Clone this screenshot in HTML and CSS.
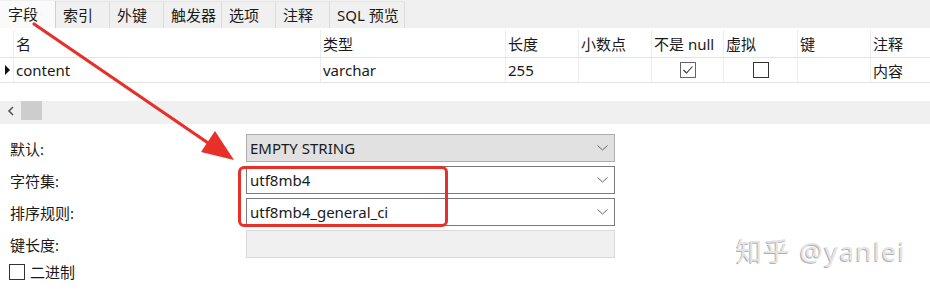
FILE: index.html
```html
<!DOCTYPE html>
<html lang="zh">
<head>
<meta charset="utf-8">
<link rel="stylesheet" href="styles.css">
</head>
<body>
<div class="page">
  <div class="tabs">
    <div class="tab active">字段</div>
    <div class="tab">索引</div>
    <div class="tab">外键</div>
    <div class="tab">触发器</div>
    <div class="tab">选项</div>
    <div class="tab">注释</div>
    <div class="tab">SQL 预览</div>
    <div class="tab-fill"></div>
  </div>

  <div class="grid">
    <div class="cell ind"></div>
    <div class="cell">名</div>
    <div class="cell">类型</div>
    <div class="cell">长度</div>
    <div class="cell">小数点</div>
    <div class="cell">不是 null</div>
    <div class="cell">虚拟</div>
    <div class="cell">键</div>
    <div class="cell last">注释</div>

    <div class="cell ind"><span class="tri"></span></div>
    <div class="cell">content</div>
    <div class="cell">varchar</div>
    <div class="cell">255</div>
    <div class="cell"></div>
    <div class="cell center"><span class="cb checked"><svg width="12" height="10" viewBox="0 0 12 10"><path d="M1.5 5 L4.5 8 L10.5 1.5" fill="none" stroke="#333" stroke-width="1.1"/></svg></span></div>
    <div class="cell center"><span class="cb"></span></div>
    <div class="cell"></div>
    <div class="cell last">内容</div>
  </div>

  <div class="hscroll">
    <span class="sarrow"><svg width="8" height="10" viewBox="0 0 8 10"><path d="M6 1 L2 5 L6 9" fill="none" stroke="#555" stroke-width="1.6"/></svg></span>
    <span class="thumb"></span>
  </div>

  <div class="form">
    <div class="frow">
      <div class="flabel">默认:</div>
      <div class="select disabled"><span>EMPTY STRING</span><svg class="chev" width="11" height="6" viewBox="0 0 11 6"><path d="M0.5 0.5 L5.5 5 L10.5 0.5" fill="none" stroke="#666" stroke-width="1"/></svg></div>
    </div>
    <div class="frow">
      <div class="flabel">字符集:</div>
      <div class="select"><span>utf8mb4</span><svg class="chev" width="11" height="6" viewBox="0 0 11 6"><path d="M0.5 0.5 L5.5 5 L10.5 0.5" fill="none" stroke="#666" stroke-width="1"/></svg></div>
    </div>
    <div class="frow">
      <div class="flabel">排序规则:</div>
      <div class="select"><span>utf8mb4_general_ci</span><svg class="chev" width="11" height="6" viewBox="0 0 11 6"><path d="M0.5 0.5 L5.5 5 L10.5 0.5" fill="none" stroke="#666" stroke-width="1"/></svg></div>
    </div>
    <div class="frow">
      <div class="flabel">键长度:</div>
      <div class="select empty"></div>
    </div>
    <div class="crow">
      <span class="cb big"></span>
      <span>二进制</span>
    </div>
  </div>

  <div class="highlight"></div>
  <svg class="arrow" width="930" height="294" viewBox="0 0 930 294">
    <line x1="34" y1="24" x2="214" y2="147" stroke="#e8302a" stroke-width="3.2" stroke-linecap="round"/>
    <polygon points="234,160 201,152 215,131" fill="#e8302a"/>
  </svg>
  <div class="watermark">知乎 @yanlei</div>
</div>
</body>
</html>
```

FILE: styles.css
```css
* { box-sizing: border-box; }
html, body { margin: 0; padding: 0; background: #fff; }
body {
  font-family: "Noto Sans", "Noto Sans CJK SC", sans-serif;
  font-size: 15px;
  color: #1a1a1a;
}
.page {
  position: relative;
  width: 930px;
  height: 294px;
  overflow: hidden;
}
.tabs {
  display: flex;
  height: 28px;
  background: #f0f0f0;
  padding-top: 1px;
}
.tab {
  min-width: 54px;
  padding: 0 5px 0 7px;
  line-height: 26px;
  background: #f0f0f0;
  border-right: 1px solid #dcdcdc;
  border-top: 1px solid #e6e6e6;
  white-space: nowrap;
}
.tab.active {
  background: #fafafa;
  min-width: 56px;
  padding-left: 8px;
  border-right: 1px solid #d0d0d0;
  border-top: none;
}
.tab-fill { flex: 1; background: #f0f0f0; }

.grid {
  margin-top: 2px;
  display: grid;
  grid-template-columns: 13px 307px 185px 73px 73px 72px 74px 73px 60px;
  grid-template-rows: 28px 25px;
}
.grid .cell {
  border-bottom: 1px solid #e3e3e3;
  border-left: 1px solid #ececec;
  padding-left: 2px;
  white-space: nowrap;
  overflow: hidden;
  display: flex;
  align-items: center;
}
.grid .cell.ind { border-left: none; padding-left: 5px; }
.grid .cell.center { justify-content: center; padding-left: 0; }
.tri {
  width: 0; height: 0;
  border-top: 5px solid transparent;
  border-bottom: 5px solid transparent;
  border-left: 5px solid #111;
}
.cb {
  display: inline-flex;
  align-items: center;
  justify-content: center;
  width: 16px;
  height: 16px;
  border: 1px solid #333;
  background: #fff;
}
.cb.checked { border-color: #666; }

.hscroll {
  margin-top: 18px;
  height: 23px;
  background: #f0f0f0;
  display: flex;
  align-items: flex-start;
}
.sarrow {
  width: 21px;
  height: 19px;
  display: flex;
  align-items: center;
  justify-content: center;
}
.thumb {
  width: 21px;
  height: 19px;
  background: #cdcdcd;
}

.form {
  padding-top: 10px;
  display: flex;
  flex-direction: column;
  gap: 4px;
}
.frow {
  display: flex;
  align-items: center;
  height: 28px;
}
.flabel {
  width: 246px;
  padding-left: 10px;
}
.select {
  width: 369px;
  height: 28px;
  border: 1px solid #7a7a7a;
  background: #fff;
  display: flex;
  align-items: center;
  justify-content: space-between;
  padding: 0 6px 0 3px;
}
.select.disabled { background: #e1e1e1; border-color: #adadad; }
.select.empty { background: #f0f0f0; border-color: #d9d9d9; }
.crow {
  margin-top: -1px;
  display: flex;
  align-items: center;
  gap: 5px;
  padding-left: 9px;
}

.highlight {
  position: absolute;
  left: 238px;
  top: 166px;
  width: 210px;
  height: 61px;
  border: 3px solid #e8302a;
  border-radius: 6px;
}
.arrow { position: absolute; left: 0; top: 0; pointer-events: none; }
.watermark {
  position: absolute;
  left: 736px;
  top: 238px;
  font-size: 26px;
  line-height: 1;
  color: #e4e4e4;
  text-shadow: -1px 1px 0 #b0b0b0;
  letter-spacing: 1.6px;
  white-space: nowrap;
}
```
